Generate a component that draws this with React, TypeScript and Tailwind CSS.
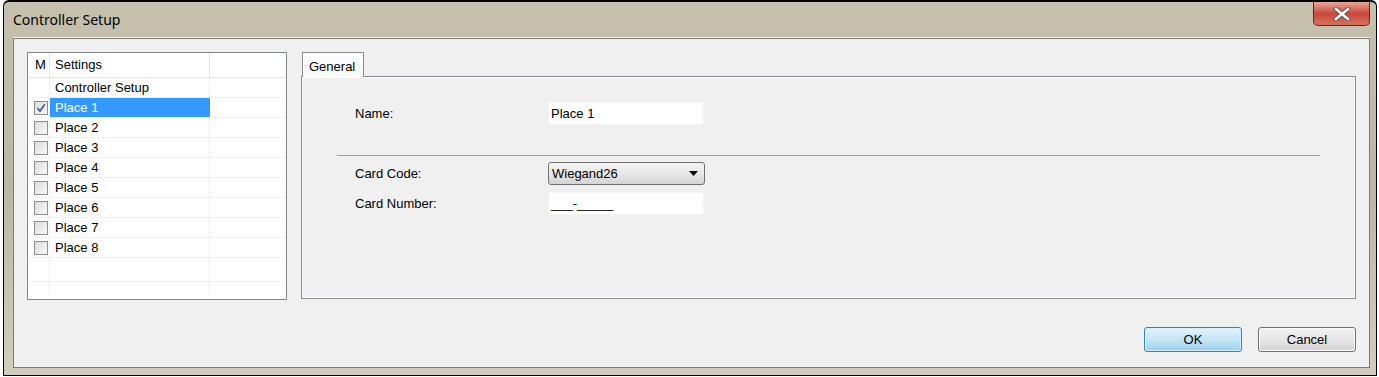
import React from "react";

const places = ["Place 1", "Place 2", "Place 3", "Place 4", "Place 5", "Place 6", "Place 7", "Place 8"];

function CheckBox({ checked }: { checked?: boolean }) {
  return (
    <div className="w-[14px] h-[14px] border border-[#8e8f8f] bg-gradient-to-br from-[#dcdcdc] to-[#f8f8f8] flex items-center justify-center">
      {checked && (
        <svg width="10" height="10" viewBox="0 0 10 10">
          <path d="M1.5 5.2 L4 8 L8.8 1.2" fill="none" stroke="#4a5f97" strokeWidth="1.8" />
        </svg>
      )}
    </div>
  );
}

function CloseButton() {
  return (
    <div className="w-[57px] h-[24px] rounded-b-[5px] border border-t-0 border-[#5b2a1f] bg-gradient-to-b from-[#e9a697] via-[#c8493a] to-[#d8705c] flex items-center justify-center">
      <svg width="20" height="14" viewBox="0 0 20 14">
        <path d="M4 2 L16 12 M16 2 L4 12" stroke="#6b4a44" strokeWidth="4.4" strokeLinecap="square" />
        <path d="M4 2 L16 12 M16 2 L4 12" stroke="#ffffff" strokeWidth="2.6" strokeLinecap="square" />
      </svg>
    </div>
  );
}

export default function App() {
  return (
    <div className="w-[1379px] h-[377px] bg-white overflow-hidden font-['Liberation_Sans',Arial,sans-serif] text-[13px] text-black">
      {/* Fensterrahmen */}
      <div className="ml-[3px] w-[1374px] h-[376px] border border-t-2 border-black rounded-tl-[6px] rounded-tr-[6px] bg-gradient-to-b from-[#c6c1ae] via-[#bcb7a5] to-[#d3cdbb] flex flex-col">
        <div className="h-[36px] flex items-start justify-between pl-[9px] pr-[6px]">
          <div className="mt-[11px] text-[14px] font-['Noto_Sans',sans-serif] text-black leading-none">Controller Setup</div>
          <CloseButton />
        </div>

        {/* Client-Bereich */}
        <div className="ml-[9px] mr-[6px] h-[330px] border border-[#7e7a6d] shadow-[0_-1px_0_#f4f2ea] bg-[#f0f0f0] pt-[13px] pl-[13px] pr-[11px]">
          <div className="flex gap-[14px]">
            {/* Liste */}
            <div className="w-[260px] h-[248px] border border-[#828790] bg-white overflow-hidden">
              <div className="flex h-[25px] border-b border-[#e5e5e5]">
                <div className="w-[22px] pl-[7px] border-r border-[#e5e5e5] flex items-center">
                  <div className="w-[11px] overflow-hidden whitespace-nowrap">M</div>
                </div>
                <div className="w-[160px] pl-[5px] border-r border-[#e5e5e5] flex items-center">Settings</div>
                <div className="flex-1" />
              </div>
              <div className="flex h-[20px] border-b border-[#f0f0f0]">
                <div className="w-[22px] border-r border-[#f0f0f0]" />
                <div className="w-[160px] pl-[5px] border-r border-[#f0f0f0] flex items-center">Controller Setup</div>
                <div className="flex-1" />
              </div>
              {places.map((p, i) => (
                <div key={p} className="flex h-[20px] border-b border-[#f0f0f0]">
                  <div className="w-[22px] border-r border-[#f0f0f0] flex items-center pl-[6px]">
                    <CheckBox checked={i === 0} />
                  </div>
                  <div
                    className={
                      i === 0
                        ? "w-[160px] pl-[5px] bg-[#3399ff] text-white flex items-center"
                        : "w-[160px] pl-[5px] border-r border-[#f0f0f0] flex items-center"
                    }
                  >
                    {p}
                  </div>
                  <div className="flex-1" />
                </div>
              ))}
              <div className="flex h-[24px] border-b border-[#f0f0f0]">
                <div className="w-[22px] border-r border-[#f0f0f0]" />
                <div className="w-[160px] border-r border-[#f0f0f0]" />
                <div className="flex-1" />
              </div>
              <div className="flex h-[30px]">
                <div className="w-[22px] border-r border-[#f0f0f0]" />
                <div className="w-[160px] border-r border-[#f0f0f0]" />
                <div className="flex-1" />
              </div>
            </div>

            {/* Registerkarten */}
            <div className="w-[1055px] flex flex-col">
              <div className="flex h-[24px]">
                <div className="ml-[1px] w-[62px] h-[25px] border border-b-0 border-[#898c95] bg-[#fbfbfb] pl-[6px] pt-[4px] relative z-10">General</div>
              </div>
              <div className="h-[223px] border border-[#898c95] bg-[#f0f0f0] shadow-[inset_1px_1px_0_#ffffff,inset_-1px_-1px_0_#ffffff]">
                <div className="mt-[25px] flex items-center h-[23px]">
                  <div className="w-[246px] pl-[53px]">Name:</div>
                  <div className="w-[156px] h-[23px] bg-white border border-[#f3f3f3] pl-[2px] flex items-center">Place 1</div>
                </div>
                <div className="mt-[30px] ml-[35px] w-[983px] border-t border-[#a0a0a0] h-[1px] bg-white" />
                <div className="mt-[6px] flex items-center h-[23px]">
                  <div className="w-[246px] pl-[53px]">Card Code:</div>
                  <div className="w-[157px] h-[23px] rounded-[3px] border border-[#707070] bg-gradient-to-b from-[#f4f4f4] via-[#e8e8e8] to-[#d4d4d4] pl-[3px] pr-[6px] flex items-center justify-between">
                    <span>Wiegand26</span>
                    <svg width="9" height="5" viewBox="0 0 9 5">
                      <path d="M0 0 L9 0 L4.5 5 Z" fill="#000" />
                    </svg>
                  </div>
                </div>
                <div className="mt-[7px] flex items-center h-[23px]">
                  <div className="w-[246px] pl-[53px]">Card Number:</div>
                  <div className="w-[156px] h-[23px] bg-white border border-[#f3f3f3] pl-[2px] flex items-center">___-_____</div>
                </div>
              </div>
            </div>
          </div>

          {/* Schaltflächen */}
          <div className="mt-[27px] pr-[2px] flex justify-end gap-[16px]">
            <button className="w-[98px] h-[25px] rounded-[3px] border border-[#3c7fb1] bg-gradient-to-b from-[#e5f4fc] via-[#c4e5f6] to-[#98d1ef] shadow-[inset_0_0_0_1px_#d4eefc]">OK</button>
            <button className="w-[98px] h-[25px] rounded-[3px] border border-[#707070] bg-gradient-to-b from-[#f2f2f2] via-[#e6e6e6] to-[#d2d2d2] shadow-[inset_0_0_0_1px_#fcfcfc]">Cancel</button>
          </div>
        </div>
      </div>
    </div>
  );
}
